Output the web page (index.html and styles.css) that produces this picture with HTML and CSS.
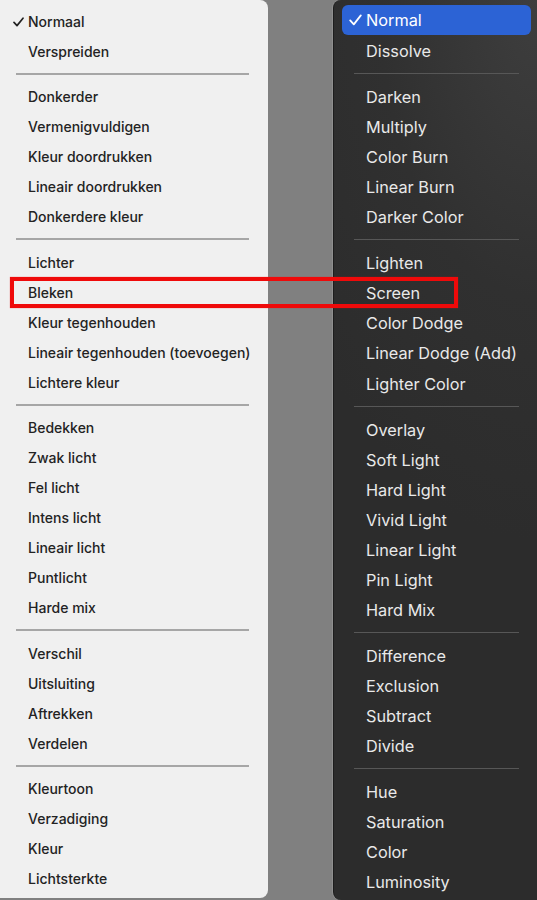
FILE: index.html
```html
<!DOCTYPE html>
<html lang="nl">
<head>
<meta charset="utf-8">
<title>Overvloeimodi</title>
<link rel="stylesheet" href="styles.css">
</head>
<body>
<div class="stage">
  <div class="menu light">
    <div class="item checked"><svg class="check" width="11" height="10" viewBox="0 0 11 10"><path d="M1 5.4 L4 8.6 L10 1.2" fill="none" stroke="currentColor" stroke-width="1.7" stroke-linecap="round" stroke-linejoin="round"/></svg>Normaal</div>
    <div class="item">Verspreiden</div>
    <div class="sep"></div>
    <div class="item">Donkerder</div>
    <div class="item">Vermenigvuldigen</div>
    <div class="item">Kleur doordrukken</div>
    <div class="item">Lineair doordrukken</div>
    <div class="item">Donkerdere kleur</div>
    <div class="sep"></div>
    <div class="item">Lichter</div>
    <div class="item">Bleken</div>
    <div class="item">Kleur tegenhouden</div>
    <div class="item">Lineair tegenhouden (toevoegen)</div>
    <div class="item">Lichtere kleur</div>
    <div class="sep"></div>
    <div class="item">Bedekken</div>
    <div class="item">Zwak licht</div>
    <div class="item">Fel licht</div>
    <div class="item">Intens licht</div>
    <div class="item">Lineair licht</div>
    <div class="item">Puntlicht</div>
    <div class="item">Harde mix</div>
    <div class="sep"></div>
    <div class="item">Verschil</div>
    <div class="item">Uitsluiting</div>
    <div class="item">Aftrekken</div>
    <div class="item">Verdelen</div>
    <div class="sep"></div>
    <div class="item">Kleurtoon</div>
    <div class="item">Verzadiging</div>
    <div class="item">Kleur</div>
    <div class="item">Lichtsterkte</div>
  </div>
  <div class="gap"></div>
  <div class="menu dark">
    <div class="item selected"><svg class="check" width="13" height="12" viewBox="0 0 13 12"><path d="M1.2 6.4 L4.8 10.4 L11.8 1.4" fill="none" stroke="currentColor" stroke-width="1.8" stroke-linecap="round" stroke-linejoin="round"/></svg>Normal</div>
    <div class="item">Dissolve</div>
    <div class="sep"></div>
    <div class="item">Darken</div>
    <div class="item">Multiply</div>
    <div class="item">Color Burn</div>
    <div class="item">Linear Burn</div>
    <div class="item">Darker Color</div>
    <div class="sep"></div>
    <div class="item">Lighten</div>
    <div class="item">Screen</div>
    <div class="item">Color Dodge</div>
    <div class="item">Linear Dodge (Add)</div>
    <div class="item">Lighter Color</div>
    <div class="sep"></div>
    <div class="item">Overlay</div>
    <div class="item">Soft Light</div>
    <div class="item">Hard Light</div>
    <div class="item">Vivid Light</div>
    <div class="item">Linear Light</div>
    <div class="item">Pin Light</div>
    <div class="item">Hard Mix</div>
    <div class="sep"></div>
    <div class="item">Difference</div>
    <div class="item">Exclusion</div>
    <div class="item">Subtract</div>
    <div class="item">Divide</div>
    <div class="sep"></div>
    <div class="item">Hue</div>
    <div class="item">Saturation</div>
    <div class="item">Color</div>
    <div class="item">Luminosity</div>
  </div>
  <div class="highlight-box"></div>
</div>
</body>
</html>
```
FILE: styles.css
```css
html, body {
  margin: 0;
  padding: 0;
}
body {
  background: #808080;
  width: 537px;
  height: 900px;
  overflow: hidden;
}
.stage {
  position: relative;
  display: flex;
  height: 900px;
}
.menu {
  display: flex;
  flex-direction: column;
  box-sizing: border-box;
}
.light {
  width: 268px;
  background: #f0f0f0;
  border-radius: 0 8px 8px 0;
  padding-top: 7px;
  color: #232323;
  font-family: "Inter", "Liberation Sans", sans-serif;
  font-size: 14px;
  font-weight: 500;
  height: 898px;
}
.light .item {
  position: relative;
  height: 30px;
  line-height: 30px;
  padding-left: 28px;
  white-space: nowrap;
}
.light .check {
  position: absolute;
  left: 13px;
  top: 10px;
}
.light .sep {
  height: 15.4px;
  box-sizing: border-box;
  padding-top: 6px;
  margin: 0 19px 0 16px;
}
.light .sep::before {
  content: "";
  display: block;
  height: 2px;
  background: #a6a6a6;
}
.gap {
  width: 65px;
  flex: none;
}
.dark {
  flex: 1;
  background: radial-gradient(ellipse 140% 60% at 100% 0%, #3e3e3e 0%, #303030 55%, #2c2c2c 100%);
  border-radius: 8px 0 0 8px;
  border-left: 1px solid #1d1d1d;
  box-shadow: -1px 0 0 rgba(255,255,255,0.12);
  padding-top: 6px;
  color: #e9e9e9;
  font-family: "Inter", "Liberation Sans", sans-serif;
  font-size: 16.3px;
}
.dark .item {
  position: relative;
  height: 30.05px;
  line-height: 30px;
  padding-left: 32px;
  white-space: nowrap;
}
.dark .item.selected {
  margin: -1px 6px 1px 8px;
  padding-left: 24px;
  background: #2c63d5;
  border-radius: 6px;
  color: #fff;
}
.dark .check {
  position: absolute;
  left: 7px;
  top: 9px;
}
.dark .sep {
  height: 16px;
  box-sizing: border-box;
  padding-top: 7px;
  margin: 0 18px 0 20px;
}
.dark .sep::before {
  content: "";
  display: block;
  height: 1px;
  background: #575757;
}
.highlight-box {
  position: absolute;
  left: 10px;
  top: 277px;
  width: 448px;
  height: 31px;
  box-sizing: border-box;
  border: 4px solid #ef0a0a;
  box-shadow: 0 0 1px rgba(239,10,10,0.6);
}
```
